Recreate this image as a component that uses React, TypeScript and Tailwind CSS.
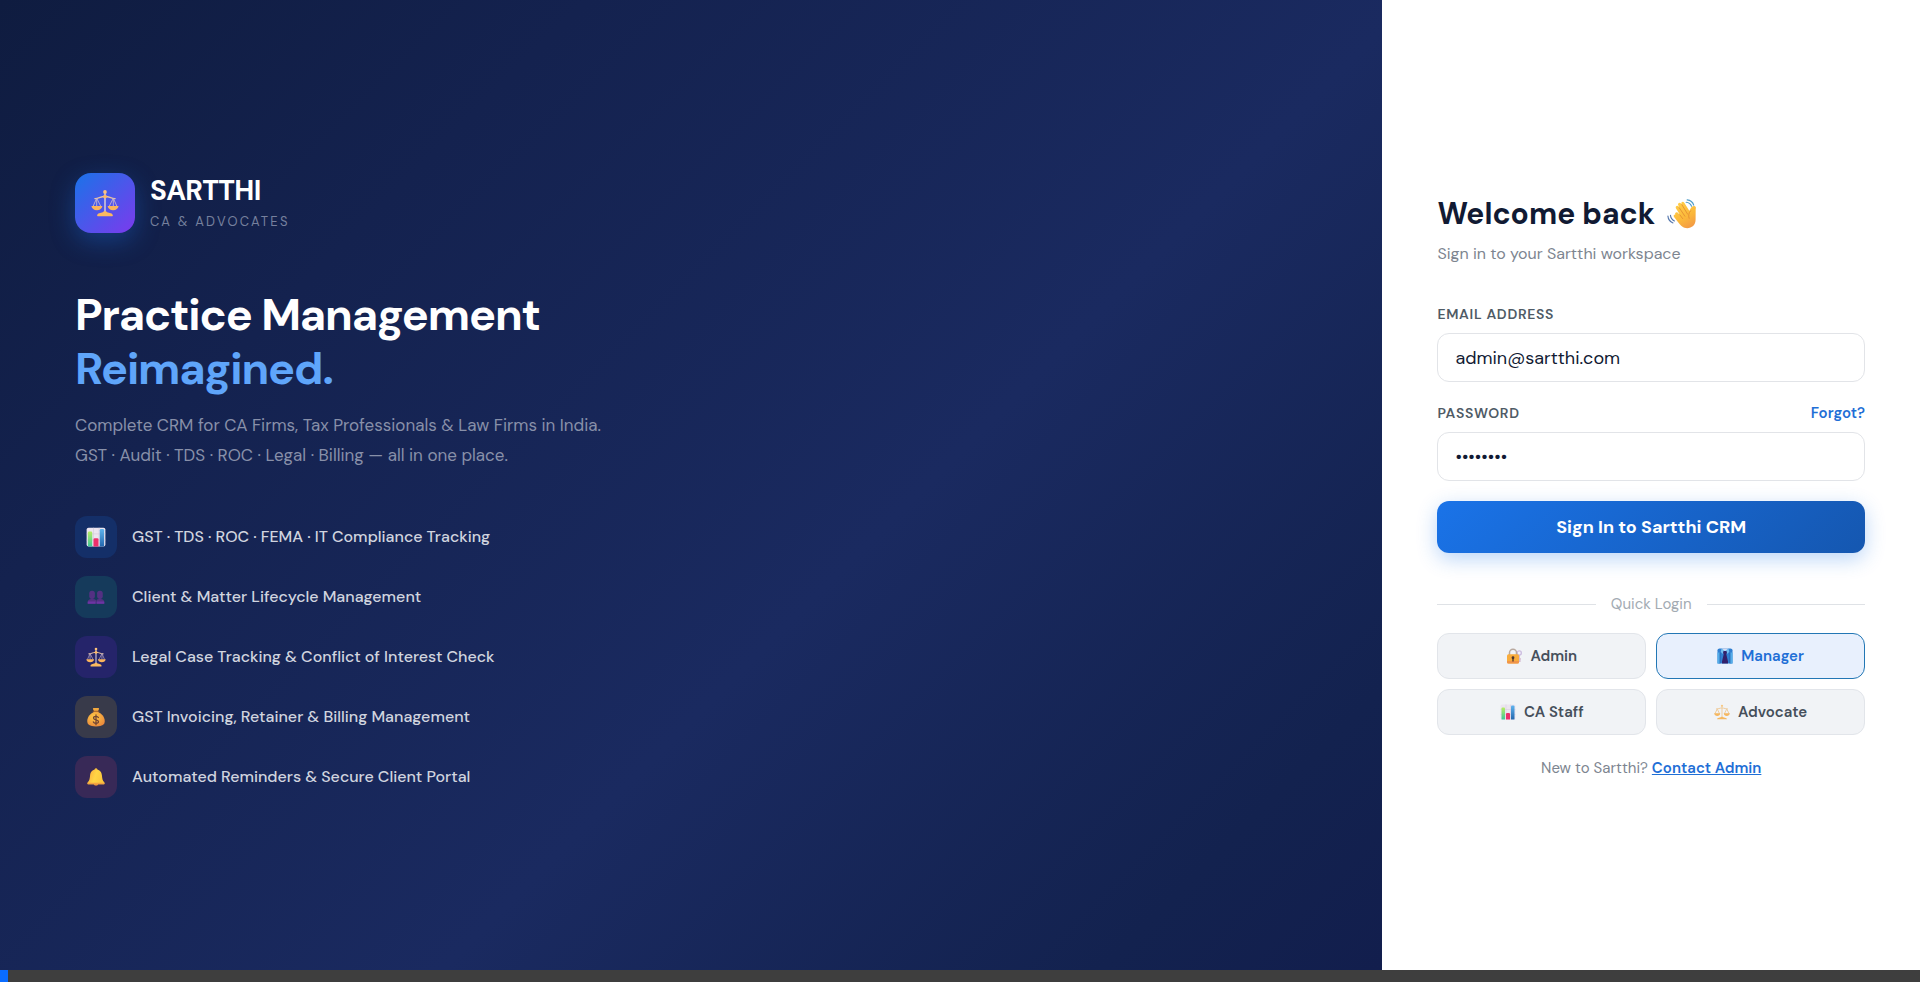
import { useState } from "react";
import type { FormEvent, ReactNode } from "react";

type IconProps = { className?: string };

function ScalesIcon({ className }: IconProps) {
  return (
    <svg viewBox="0 0 32 32" className={className} aria-hidden="true" fill="none">
      <path d="M16 4v22" stroke="#d3c8d6" strokeWidth="1.8" />
      <path d="M4.500 11c4 .3 6-2.500 11.500-2.500S23.500 11.300 27.500 11" stroke="#e9c3a0" strokeWidth="1.600" strokeLinecap="round" />
      <path d="M6.500 10.500 2.300 20M6.500 10.500 11.300 20M25.500 10.500 20.700 20M25.500 10.500 29.700 20M6.500 10.500V20M25.500 10.500V20" stroke="#c9b7cf" strokeWidth="1" />
      <path d="M.5 19.500H13c-.3 3-2.900 4.800-6.250 4.800S.8 22.500.5 19.500Z" fill="#fbb45c" />
      <path d="M19 19.500h12.500c-.3 3-2.900 4.800-6.250 4.800s-5.950-1.800-6.250-4.800Z" fill="#fbb45c" />
      <path d="M7 30.200c.3-2.700 4-2.900 6.500-3.700.8-.3 1-1.300 2.500-1.300s1.700 1 2.500 1.300c2.500.8 6.200 1 6.500 3.700.05.500-.3.800-.8.800H7.800c-.5 0-.85-.3-.8-.8Z" fill="#fcb95f" />
      <circle cx="16" cy="3.300" r="2.100" fill="#fdc37c" />
      <circle cx="16" cy="8.700" r="2.200" fill="#fdb864" />
    </svg>
  );
}

function ChartIcon({ className }: IconProps) {
  return (
    <svg viewBox="0 0 32 32" className={className} aria-hidden="true">
      <defs>
        <linearGradient id="chart-green" x1="0" y1="0" x2="0" y2="1">
          <stop stopColor="#b6ee62" />
          <stop offset="1" stopColor="#41c69a" />
        </linearGradient>
        <linearGradient id="chart-blue" x1="0" y1="0" x2="0" y2="1">
          <stop stopColor="#5fb4ee" />
          <stop offset="1" stopColor="#2467ae" />
        </linearGradient>
      </defs>
      <rect x="1" y="1" width="30" height="30" rx="3" fill="#ece5f0" />
      <path d="M12 1v30M21 1v30M1 11h30M1 21h30" stroke="#cfc4d8" strokeWidth=".8" />
      <path d="M3 9a2 2 0 0 1 2-2h3a2 2 0 0 1 2 2v22H4a1 1 0 0 1-1-1Z" fill="url(#chart-green)" />
      <path d="M12 20a2 2 0 0 1 2-2h4a2 2 0 0 1 2 2v11h-8Z" fill="#ed2f6b" />
      <path d="M22 5a2 2 0 0 1 2-2h3a2 2 0 0 1 2 2v25a1 1 0 0 1-1 1h-6Z" fill="url(#chart-blue)" />
    </svg>
  );
}

function PeopleIcon({ className }: IconProps) {
  return (
    <svg viewBox="0 0 32 32" className={className} aria-hidden="true">
      <g fill="#533083">
        <rect x="4" y="5" width="10" height="14" rx="4.500" />
        <rect x="18" y="5" width="10" height="14" rx="4.500" />
        <path d="M1 27c0-5 2-7 5-7l1-2h4l1 2c2 0 3.500.8 4.300 2.200v4.800c0 .6-.3 1-.9 1H2c-.6 0-1-.4-1-1Z" />
        <path d="M31 27c0-5-2-7-5-7l-1-2h-4l-1 2c-2 0-2.800.8-3.200 2.200v4.800c0 .6.3 1 .9 1H30c.6 0 1-.4 1-1Z" />
      </g>
      <path d="M1.500 24h13.500v4H2c-.6 0-.9-.9-.5-4ZM17 24h13.500c.4 3 .1 4-.5 4H17Z" fill="#6c35a3" />
    </svg>
  );
}

function MoneyBagIcon({ className }: IconProps) {
  return (
    <svg viewBox="0 0 32 32" className={className} aria-hidden="true">
      <defs>
        <radialGradient id="bag" cx=".4" cy=".35" r=".75">
          <stop stopColor="#ffca45" />
          <stop offset="1" stopColor="#e8843c" />
        </radialGradient>
      </defs>
      <path d="M11.500 1.800c1.500-1 3 .5 4.500-.3 1.500.8 3-.7 4.500.3.900.6.3 1.700-.3 2.700L18.700 8h-5.400l-1.500-3.500c-.6-1-1.200-2.100-.3-2.700Z" fill="#f3a93f" />
      <path d="M12.500 8h7C25 10.500 30 16 30 22.500c0 6-3.500 8.500-14 8.500S2 28.500 2 22.500C2 16 7 10.500 12.500 8Z" fill="url(#bag)" />
      <path d="M11.500 6.800h9" stroke="#9c5a2a" strokeWidth="1.800" strokeLinecap="round" />
      <path d="M19.800 16.800c-.6-1.300-2-2-3.800-2-2.300 0-4 1-4 2.800 0 4 8 1.800 8 5.700 0 1.800-1.700 2.900-4 2.900-2 0-3.600-.8-4.200-2.300M16 12.700v15.500" fill="none" stroke="#6e4234" strokeWidth="2" strokeLinecap="round" />
    </svg>
  );
}

function BellIcon({ className }: IconProps) {
  return (
    <svg viewBox="0 0 32 32" className={className} aria-hidden="true">
      <defs>
        <linearGradient id="bell" x1="0" y1="0" x2="1" y2=".3">
          <stop stopColor="#f9a63a" />
          <stop offset=".55" stopColor="#ffd545" />
          <stop offset="1" stopColor="#fbc63c" />
        </linearGradient>
      </defs>
      <path d="M12 28h8a4 3.500 0 0 1-8 0Z" fill="#e4853a" />
      <circle cx="16" cy="2.800" r="2.300" fill="#f6b73c" />
      <path d="M16 2.500c6.500 0 10 4.500 10.500 10.500.5 6 1.200 9.500 4.200 12.500.8.800.8 3.300-.7 3.300H2c-1.500 0-1.500-2.500-.7-3.300 3-3 3.700-6.500 4.200-12.500C6 7 9.500 2.500 16 2.500Z" fill="url(#bell)" />
      <path d="M1.500 26h29c.9 1 .8 2.800-.5 2.800H2C.7 28.800.6 27 1.500 26Z" fill="#f3a242" />
    </svg>
  );
}

function WaveIcon({ className }: IconProps) {
  return (
    <svg viewBox="0 0 32 32" className={className} aria-hidden="true" fill="none">
      <defs>
        <linearGradient id="hand" x1=".2" y1="0" x2=".7" y2="1">
          <stop stopColor="#ffcf4a" />
          <stop offset=".6" stopColor="#fbb83a" />
          <stop offset="1" stopColor="#f39a45" />
        </linearGradient>
      </defs>
      <path
        d="M8.900 16.600c-1-1.500 1.200-3.300 2.600-1.900l2.200 2.200-4.200-7.100c-1-1.900 1.600-3.500 2.900-1.700l.7 1-1.200-2.700c-.9-2 1.900-3.400 3-1.600l.9 1.600-.4-1.400c-.6-1.900 2-2.800 3-1.100l5.400 8.700 1.900-3.200c.8-1.500 2.200-2.300 3.600-2 1.600.4 1.800 1.800 1.300 3.400l-.1 11.400c0 5.600-4 8.900-8.900 8.900-4.300 0-7-2.600-9.300-5.700l-4.800-6.200c-1.400-1.900.9-3.600 2.500-2.200Z"
        fill="url(#hand)"
      />
      <path d="M13.700 16.900l3 4M13.100 9.400l6 9M15.800 6l6.200 10.200M25.200 12.600c-2.200 2.200-2.600 5.200-1.600 8" stroke="#e28c31" strokeWidth=".9" strokeLinecap="round" />
      <path d="M20.500 3.500c2.700.3 4.700 1.800 5.700 4.200M21.500.9c3.500.3 6 2.400 7 5.600" stroke="#4e9cc9" strokeWidth="1.200" strokeLinecap="round" />
      <path d="M3.700 17.500c.3 2.800 1.800 4.800 4.200 5.900M1 18.300c.3 3.500 2.300 6 5.400 7.200" stroke="#5577ad" strokeWidth="1.200" strokeLinecap="round" />
    </svg>
  );
}

function LockIcon({ className }: IconProps) {
  return (
    <svg viewBox="0 0 32 32" className={className} aria-hidden="true" fill="none">
      <circle cx="26.500" cy="10" r="4.200" stroke="#cdbce0" strokeWidth="2.600" />
      <path d="M26.500 14v14M26.500 22h3.500M26.500 26h3" stroke="#d3b9cf" strokeWidth="2.600" />
      <path d="M7 14V9.500a7 7 0 0 1 14 0V14" stroke="#b9a99f" strokeWidth="3" />
      <rect x="2" y="12.500" width="24" height="18.500" rx="3" fill="#f9ac3c" />
      <path d="M2 26h24v2a3 3 0 0 1-3 3H5a3 3 0 0 1-3-3Z" fill="#f0954a" />
      <circle cx="14" cy="19.500" r="2.800" fill="#4b332d" />
      <path d="M12.700 20h2.600v7h-2.600Z" fill="#4b332d" />
    </svg>
  );
}

function ShirtIcon({ className }: IconProps) {
  return (
    <svg viewBox="0 0 32 32" className={className} aria-hidden="true">
      <path d="M1 4.500C1 2.500 3 1 5 1h22c2 0 4 1.500 4 3.500V31H1Z" fill="#2f7fd2" />
      <path d="M1 9h5v22H1ZM26 9h5v22h-5Z" fill="#54aeea" />
      <path d="M6 9v22M26 9v22" stroke="#1c4f9d" strokeWidth="1.200" />
      <path d="M9 1h14l-7 8Z" fill="#d6dcf1" />
      <path d="M9 1 7.500 8l4.500 4 4-6ZM23 1l1.500 7-4.500 4-4-6Z" fill="#73bdf1" />
      <path d="M13 6h6l1 4-1.500 2L22 27v4H10v-4l3.500-15L12 10Z" fill="#33206b" />
    </svg>
  );
}

function PaleScalesIcon({ className }: IconProps) {
  return (
    <svg viewBox="0 0 32 32" className={className} aria-hidden="true" fill="none">
      <path d="M16 3v23M5 10c4 .3 6-2 11-2s7 2.300 11 2M6.500 10 2 19M6.500 10 11 19M25.500 10 21 19M25.500 10 30 19" stroke="#efcd9f" strokeWidth="2" strokeLinecap="round" />
      <path d="M.5 18.500h12c-.3 3.500-2.500 5.300-6 5.300s-5.700-1.800-6-5.300ZM19.500 18.500h12c-.3 3.500-2.500 5.300-6 5.300s-5.700-1.800-6-5.300ZM6 30.500c.3-3.500 7-3 10-5.500 3 2.500 9.700 2 10 5.500Z" fill="#f5b75f" />
      <circle cx="16" cy="3.500" r="2.200" fill="#f8c882" />
    </svg>
  );
}

const features: { label: string; tile: string; icon: ReactNode }[] = [
  { label: "GST · TDS · ROC · FEMA · IT Compliance Tracking", tile: "bg-[#142f68]", icon: <ChartIcon className="size-5" /> },
  { label: "Client & Matter Lifecycle Management", tile: "bg-[#153a5b]", icon: <PeopleIcon className="size-[18px]" /> },
  { label: "Legal Case Tracking & Conflict of Interest Check", tile: "bg-[#25246a]", icon: <ScalesIcon className="size-5" /> },
  { label: "GST Invoicing, Retainer & Billing Management", tile: "bg-[#383a4a]", icon: <MoneyBagIcon className="size-5" /> },
  { label: "Automated Reminders & Secure Client Portal", tile: "bg-[#382957]", icon: <BellIcon className="size-[18px]" /> },
];

const roles: { name: string; icon: ReactNode }[] = [
  { name: "Admin", icon: <LockIcon className="size-4" /> },
  { name: "Manager", icon: <ShirtIcon className="size-4" /> },
  { name: "CA Staff", icon: <ChartIcon className="size-4" /> },
  { name: "Advocate", icon: <PaleScalesIcon className="size-4" /> },
];

const inputClass =
  "h-[49px] w-full rounded-xl border border-[#e2e4e8] bg-white px-[17px] text-lg text-[#111a33] outline-none focus:border-[#1a73e8]";
const labelClass = "text-sm leading-5 font-semibold tracking-wider text-[#4f5b66]";

function BrandPanel() {
  return (
    <section className="flex flex-1 flex-col justify-center bg-[linear-gradient(135deg,#0f1c40_0%,#14224f_25%,#1a2a60_60%,#13224f_88%,#121e4d_100%)] px-[75px]">
      <div className="flex items-center gap-[15px]">
        <div className="flex size-[60px] items-center justify-center rounded-2xl bg-[linear-gradient(135deg,#1a73e8_0%,#7c3aed_100%)] shadow-[0_8px_24px_rgba(26,115,232,0.35)]">
          <ScalesIcon className="size-7" />
        </div>
        <div className="pt-0.5">
          <p className="text-[28px] leading-8 font-bold tracking-tight text-white">SARTTHI</p>
          <p className="mt-[5px] text-[13px] leading-5 tracking-[0.17em] text-[#76809d]">CA &amp; ADVOCATES</p>
        </div>
      </div>
      <h1 className="mt-[55px] text-[45px] leading-[54px] font-bold tracking-tight text-white">
        Practice Management
        <span className="block text-[#5fa5fa]">Reimagined.</span>
      </h1>
      <p className="mt-[14px] text-[17px] leading-[30px] text-[#8890a9]">
        Complete CRM for CA Firms, Tax Professionals &amp; Law Firms in India.
        <br />
        GST · Audit · TDS · ROC · Legal · Billing — all in one place.
      </p>
      <ul className="mt-[46px] flex flex-col gap-[18px]">
        {features.map((feature) => (
          <li key={feature.label} className="flex items-center gap-[15px]">
            <span className={`flex size-[42px] shrink-0 items-center justify-center rounded-xl ${feature.tile}`}>{feature.icon}</span>
            <span className="text-base font-medium text-[#d0d4df]">{feature.label}</span>
          </li>
        ))}
      </ul>
    </section>
  );
}

function LoginPanel() {
  const [email, setEmail] = useState("admin@sartthi.com");
  const [password, setPassword] = useState("admin123");
  const [role, setRole] = useState("Manager");
  const submit = (event: FormEvent) => event.preventDefault();

  return (
    <section className="flex w-[28%] min-w-[420px] flex-col justify-center bg-white px-[55px] pt-0.5">
      <h2 className="flex items-center gap-3 text-[30px] leading-10 font-bold text-[#111a33]">
        Welcome back
        <WaveIcon className="size-[30px]" />
      </h2>
      <p className="mt-2 text-base leading-6 text-[#7d8590]">Sign in to your Sartthi workspace</p>

      <form onSubmit={submit} className="mt-[38px]">
        <label htmlFor="email" className={`block ${labelClass}`}>
          EMAIL ADDRESS
        </label>
        <input id="email" type="email" value={email} onChange={(e) => setEmail(e.target.value)} className={`mt-[9px] ${inputClass}`} />
        <div className="mt-[21px] flex items-center justify-between">
          <label htmlFor="password" className={labelClass}>
            PASSWORD
          </label>
          <a href="#forgot" className="text-[15px] leading-5 font-semibold text-[#1f6fd6]">
            Forgot?
          </a>
        </div>
        <input id="password" type="password" value={password} onChange={(e) => setPassword(e.target.value)} className={`mt-[9px] ${inputClass}`} />
        <button
          type="submit"
          className="mt-5 h-[52px] w-full cursor-pointer rounded-xl bg-[linear-gradient(135deg,#1a73e8_0%,#1557b0_100%)] text-lg font-bold text-white shadow-[0_6px_20px_rgba(26,115,232,0.3)]"
        >
          Sign In to Sartthi CRM
        </button>
      </form>

      <div className="mt-[39px] flex items-center gap-[15px]">
        <span className="h-px flex-1 bg-[#dfe2e6]" />
        <span className="text-[15px] leading-6 text-[#a3abb3]">Quick Login</span>
        <span className="h-px flex-1 bg-[#dfe2e6]" />
      </div>

      <div className="mt-[17px] grid grid-cols-2 gap-2.5">
        {roles.map(({ name, icon }) => (
          <button
            key={name}
            type="button"
            aria-pressed={role === name}
            onClick={() => setRole(name)}
            className={`flex h-[46px] cursor-pointer items-center justify-center gap-2 rounded-xl border text-[15px] font-semibold ${
              role === name ? "border-[#2277b5] bg-[#e8f0fd] text-[#1f6fd6]" : "border-[#e2e5ea] bg-[#f1f3f6] text-[#464f5b]"
            }`}
          >
            {icon}
            {name}
          </button>
        ))}
      </div>

      <p className="mt-[23px] text-center text-[15px] leading-5 text-[#7d8590]">
        New to Sartthi?{" "}
        <a href="#contact" className="font-semibold text-[#1f6fd6] underline">
          Contact Admin
        </a>
      </p>
    </section>
  );
}

export default function App() {
  return (
    <div className="flex min-h-screen flex-col font-['DM_Sans','Inter',sans-serif]">
      <main className="flex flex-1">
        <BrandPanel />
        <LoginPanel />
      </main>
      <div className="h-3 bg-[#3e3e3e]">
        <div className="h-full w-2 bg-[#0a6cff]" />
      </div>
    </div>
  );
}
